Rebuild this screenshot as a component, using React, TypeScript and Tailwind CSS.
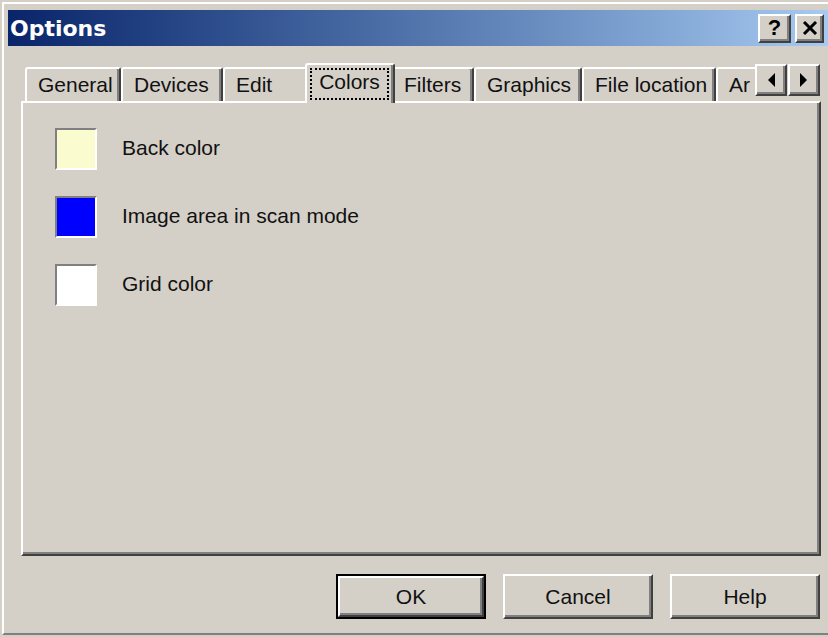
import { ReactNode } from "react";

type Tab = { label: string; width: string; active?: boolean };

const tabs: Tab[] = [
  { label: "General", width: "w-[96px]" },
  { label: "Devices", width: "w-[102px]" },
  { label: "Edit", width: "w-[86px]" },
  { label: "Colors", width: "w-[90px]", active: true },
  { label: "Filters", width: "w-[83px]" },
  { label: "Graphics", width: "w-[108px]" },
  { label: "File location", width: "w-[134px]" },
  { label: "Ar", width: "w-[110px]" },
];

const colors = [
  { label: "Back color", swatch: "bg-[#fafccf]" },
  { label: "Image area in scan mode", swatch: "bg-[#0000ff]" },
  { label: "Grid color", swatch: "bg-white" },
];

// classic raised 3D edge, doubled
const raised =
  "border-2 border-t-white border-l-white border-r-[#404040] border-b-[#404040] shadow-[inset_-2px_-2px_0_#808080] bg-[#d4d0c8]";

function TabItem({ tab }: { tab: Tab }) {
  if (tab.active) {
    return (
      <div
        className={`${tab.width} relative z-20 -mx-[4px] -mb-[2px] h-[40px] shrink-0 rounded-t-[3px] border-l-2 border-t-2 border-r-2 border-l-white border-t-white border-r-[#404040] bg-[#d4d0c8] shadow-[inset_-2px_0_0_#808080] pt-[3px] pl-[3px]`}
      >
        <div className="flex h-[32px] w-[79px] items-center justify-center border-2 border-dotted border-black pb-[4px]">
          Colors
        </div>
      </div>
    );
  }
  return (
    <div
      className={`${tab.width} flex h-[34px] shrink-0 items-center rounded-t-[3px] border-l-2 border-t-2 border-r-2 border-l-white border-t-white border-r-[#404040] bg-[#d4d0c8] shadow-[inset_-2px_0_0_#808080] pl-[11px] whitespace-nowrap`}
    >
      {tab.label}
    </div>
  );
}

function Button({ children, isDefault }: { children: ReactNode; isDefault?: boolean }) {
  if (isDefault) {
    return (
      <div className="h-[45px] w-[150px] border-2 border-black">
        <div className={`${raised} flex h-full w-full items-center justify-center`}>{children}</div>
      </div>
    );
  }
  return (
    <div className={`${raised} flex h-[45px] w-[150px] items-center justify-center`}>{children}</div>
  );
}

function Arrow({ dir }: { dir: "left" | "right" }) {
  return (
    <div className={`${raised} flex h-[32px] w-[32px] items-center justify-center`}>
      <svg width="8" height="14" viewBox="0 0 8 14">
        {dir === "left" ? <polygon points="8,0 8,14 1,7" fill="#000" /> : <polygon points="0,0 0,14 7,7" fill="#000" />}
      </svg>
    </div>
  );
}

export default function App() {
  return (
    <div className="h-[637px] w-[828px] overflow-hidden bg-[#d4d0c8] font-['Liberation_Sans',Arial,sans-serif] text-[21px] text-[#111]">
      <div className="ml-[2px] mt-[2px] h-[633px] border-b-2 border-l-2 border-t-2 border-b-[#808080] border-l-white border-t-white pl-[4px] pt-[6px]">
        {/* caption */}
        <div className="flex h-[36px] w-[820px] items-center bg-gradient-to-r from-[#0a246a] to-[#a6caf0] pl-[2px] pr-[4px]">
          <span className="font-['DejaVu_Sans',sans-serif] text-[22px] font-bold text-white">Options</span>
          <div className="ml-auto flex gap-[4px]">
            <div className={`${raised} flex h-[29px] w-[33px] items-center justify-center font-bold text-[22px] leading-none text-black`}>
              ?
            </div>
            <div className={`${raised} flex h-[29px] w-[29px] items-center justify-center`}>
              <svg width="16" height="14" viewBox="0 0 16 14">
                <path d="M2 1 L14 13 M14 1 L2 13" stroke="#000" strokeWidth="3" />
              </svg>
            </div>
          </div>
        </div>

        <div className="pl-[13px] pt-[17px]">
          {/* tab strip */}
          <div className="relative z-10 flex h-[38px]">
            <div className="ml-[4px] flex h-[38px] w-[730px] items-end overflow-x-clip">
              {tabs.map((t) => (
                <TabItem key={t.label} tab={t} />
              ))}
            </div>
            <div className="mt-[1px] flex gap-[1px]">
              <Arrow dir="left" />
              <Arrow dir="right" />
            </div>
          </div>

          {/* page */}
          <div className="flex h-[455px] w-[800px] flex-col gap-[26px] border-2 border-l-white border-t-white border-r-[#404040] border-b-[#404040] shadow-[inset_-2px_-2px_0_#808080] pl-[32px] pt-[25px]">
            {colors.map((c) => (
              <div key={c.label} className="flex h-[42px] items-center gap-[25px]">
                <div
                  className={`${c.swatch} h-[42px] w-[42px] border-2 border-l-[#808080] border-t-[#808080] border-r-white border-b-white`}
                />
                <span className="pb-[3px]">{c.label}</span>
              </div>
            ))}
          </div>

          <div className="mt-[18px] flex w-[800px] justify-end gap-[17px] pr-[1px]">
            <Button isDefault>OK</Button>
            <Button>Cancel</Button>
            <Button>Help</Button>
          </div>
        </div>
      </div>
    </div>
  );
}
